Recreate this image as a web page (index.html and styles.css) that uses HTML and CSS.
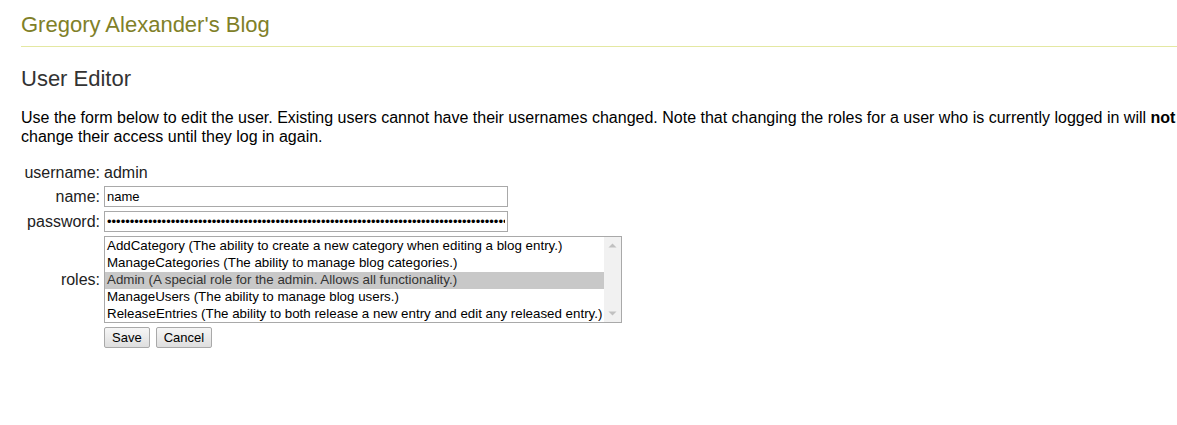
FILE: index.html
```html
<!DOCTYPE html>
<html>
<head>
<meta charset="utf-8">
<link rel="stylesheet" href="styles.css">
</head>
<body>
<div class="page">
  <header class="blog-header">
    <h1 class="blog-title">Gregory Alexander's Blog</h1>
  </header>
  <h2 class="page-title">User Editor</h2>
  <p class="intro">Use the form below to edit the user. Existing users cannot have their usernames changed. Note that changing the roles for a user who is currently logged in will <b>not</b> change their access until they log in again.</p>
  <form class="user-form">
    <table class="form-table">
      <tr>
        <td class="label">username:</td>
        <td class="value">admin</td>
      </tr>
      <tr>
        <td class="label">name:</td>
        <td><input class="text-input" type="text" value="name"></td>
      </tr>
      <tr>
        <td class="label">password:</td>
        <td><input class="text-input" type="password" value="xxxxxxxxxxxxxxxxxxxxxxxxxxxxxxxxxxxxxxxxxxxxxxxxxxxxxxxxxxxxxxxxxxxxxxxxxxxxxxxxxxxxxxxxxxxxxxxxxxxxxxxxxxxxxxxxxxxxxxxx"></td>
      </tr>
      <tr>
        <td class="label">roles:</td>
        <td>
          <div class="listbox">
            <select class="roles" multiple size="5">
              <option>AddCategory (The ability to create a new category when editing a blog entry.)</option>
              <option>ManageCategories (The ability to manage blog categories.)</option>
              <option selected>Admin (A special role for the admin. Allows all functionality.)</option>
              <option>ManageUsers (The ability to manage blog users.)</option>
              <option>ReleaseEntries (The ability to both release a new entry and edit any released entry.)</option>
            </select>
            <div class="scrollbar">
              <svg class="arrow" width="17" height="17" viewBox="0 0 17 17"><path d="M4.5 10.5 L8.5 6.5 L12.5 10.5 Z" fill="#c1c1c1"/></svg>
              <svg class="arrow" width="17" height="17" viewBox="0 0 17 17"><path d="M4.5 6.5 L8.5 10.5 L12.5 6.5 Z" fill="#c1c1c1"/></svg>
            </div>
          </div>
        </td>
      </tr>
      <tr>
        <td></td>
        <td class="buttons">
          <button type="button" class="btn">Save</button>
          <button type="button" class="btn">Cancel</button>
        </td>
      </tr>
    </table>
  </form>
</div>
</body>
</html>
```

FILE: styles.css
```css
html, body {
  margin: 0;
  padding: 0;
  background: #ffffff;
}

body {
  font-family: "Liberation Sans", Arial, sans-serif;
  color: #000;
}

.page {
  padding: 0 0 0 21px;
}

.blog-header {
  border-bottom: 1px solid #e4e8a2;
  padding-top: 12px;
  padding-bottom: 8px;
}

.blog-title {
  margin: 0;
  font-size: 22px;
  font-weight: normal;
  line-height: 26px;
  color: #808028;
}

.page-title {
  margin: 19px 0 0 0;
  font-size: 22px;
  font-weight: normal;
  line-height: 26px;
  color: #333333;
}

.intro {
  margin: 16px 0 0 0;
  font-size: 16px;
  line-height: 19px;
  color: #000;
}

.user-form {
  margin: 15px 0 0 0;
}

.form-table {
  border-collapse: separate;
  border-spacing: 2px 2px;
  margin-left: -3px;
  font-size: 16px;
  color: #222;
}

.form-table td {
  padding: 1px;
  vertical-align: middle;
}

.label {
  text-align: right;
  width: 79px;
}

.text-input {
  box-sizing: border-box;
  width: 404px;
  height: 21px;
  margin: 0;
  padding: 1px 2px;
  border: 1px solid #a9a9a9;
  font-family: "Liberation Sans", Arial, sans-serif;
  font-size: 13px;
  color: #000;
}

.listbox {
  box-sizing: border-box;
  display: flex;
  width: 518px;
  height: 87px;
  border: 1px solid #a9a9a9;
  background: #fff;
}

.roles {
  box-sizing: border-box;
  flex: 1;
  min-width: 0;
  height: 85px;
  margin: 0;
  padding: 1px 0 0 0;
  border: none;
  outline: none;
  font-family: "Liberation Sans", Arial, sans-serif;
  font-size: 13.33px;
  color: #000;
  overflow: hidden;
}

.roles option {
  padding: 0 2px;
  line-height: 17px;
  height: 17px;
}

.roles option:checked {
  background: #c8c8c8;
  color: #333;
}

.scrollbar {
  width: 17px;
  flex: none;
  background: #f1f1f1;
  display: flex;
  flex-direction: column;
  justify-content: space-between;
}

.arrow {
  display: block;
}

.buttons {
  padding-top: 5px;
  display: flex;
  gap: 6px;
}

.btn {
  box-sizing: border-box;
  margin: 0;
  padding: 1px 7px;
  height: 21px;
  font-family: "Liberation Sans", Arial, sans-serif;
  font-size: 13px;
  color: #000;
  background: linear-gradient(#f6f6f6, #dedede);
  border: 1px solid #a9a9a9;
  border-radius: 2px;
}
```
